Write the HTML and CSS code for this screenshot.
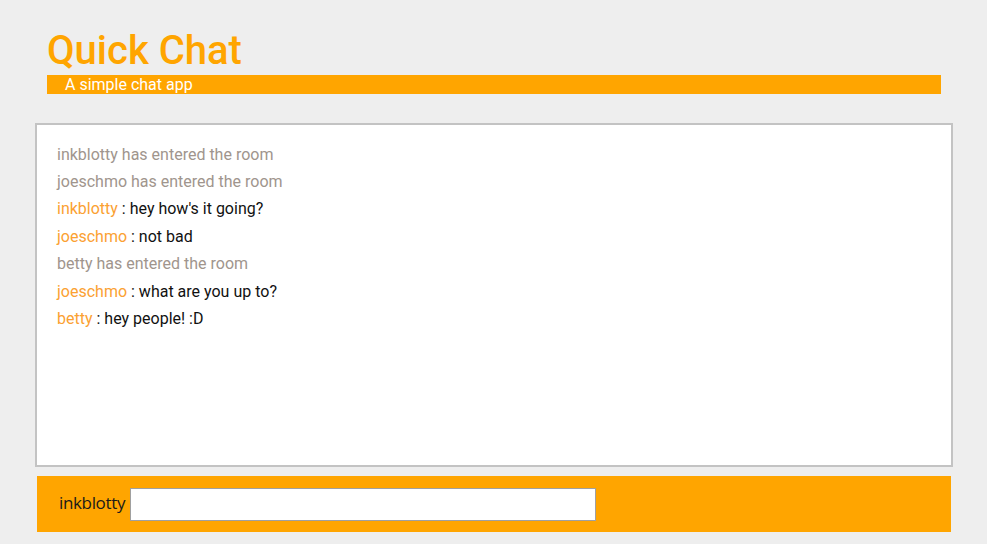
FILE: index.html
```html
<!DOCTYPE html>
<html>
<head>
<meta charset="utf-8">
<title>Quick Chat</title>
<link rel="stylesheet" href="styles.css">
</head>
<body>
<div class="app">
  <header class="header">
    <h1 class="title">Quick Chat</h1>
    <div class="subtitle">A simple chat app</div>
  </header>
  <div class="chat">
    <div class="msg sys">inkblotty has entered the room</div>
    <div class="msg sys">joeschmo has entered the room</div>
    <div class="msg"><span class="name">inkblotty</span> : hey how's it going?</div>
    <div class="msg"><span class="name">joeschmo</span> : not bad</div>
    <div class="msg sys">betty has entered the room</div>
    <div class="msg"><span class="name">joeschmo</span> : what are you up to?</div>
    <div class="msg"><span class="name">betty</span> : hey people! :D</div>
  </div>
  <form class="composer">
    <label class="who" for="m">inkblotty</label>
    <input class="field" id="m" type="text">
  </form>
</div>
</body>
</html>
```
FILE: styles.css
```css
html, body {
  margin: 0;
  padding: 0;
  background: #eeeeee;
}
body {
  font-family: Roboto, "Noto Sans", sans-serif;
}
.app {
  width: 914px;
  margin-left: 37px;
  padding-top: 27px;
}
.header {
  padding: 0 10px;
}
.title {
  margin: 0;
  font-size: 40px;
  font-weight: 500;
  color: #ffa500;
  line-height: 48px;
}
.subtitle {
  background: #ffa500;
  color: #ffffff;
  font-size: 16px;
  height: 19px;
  line-height: 20px;
  padding-left: 18px;
}
.chat {
  margin: 29px -2px 0;
  height: 314px;
  background: #ffffff;
  border: 2px solid #c3c3c3;
  padding: 15.6px 20px 10.4px;
}
.msg {
  font-size: 16px;
  line-height: 27.4px;
  color: #111111;
}
.sys {
  color: #a0958d;
}
.name {
  color: #fba132;
}
.composer {
  margin: 9px 0 0;
  height: 56px;
  background: #ffa500;
  display: flex;
  align-items: center;
  padding-left: 22px;
  box-sizing: border-box;
}
.who {
  font-family: "Open Sans", sans-serif;
  font-size: 17px;
  letter-spacing: -0.35px;
  color: #1a1a1a;
  margin-right: 5px;
  padding-bottom: 3px;
}
.field {
  width: 466px;
  height: 33px;
  box-sizing: border-box;
  border: 1px solid #a0a0a0;
  background: #ffffff;
  margin: 0;
  padding: 0 4px;
  margin-top: 1px;
}
```
